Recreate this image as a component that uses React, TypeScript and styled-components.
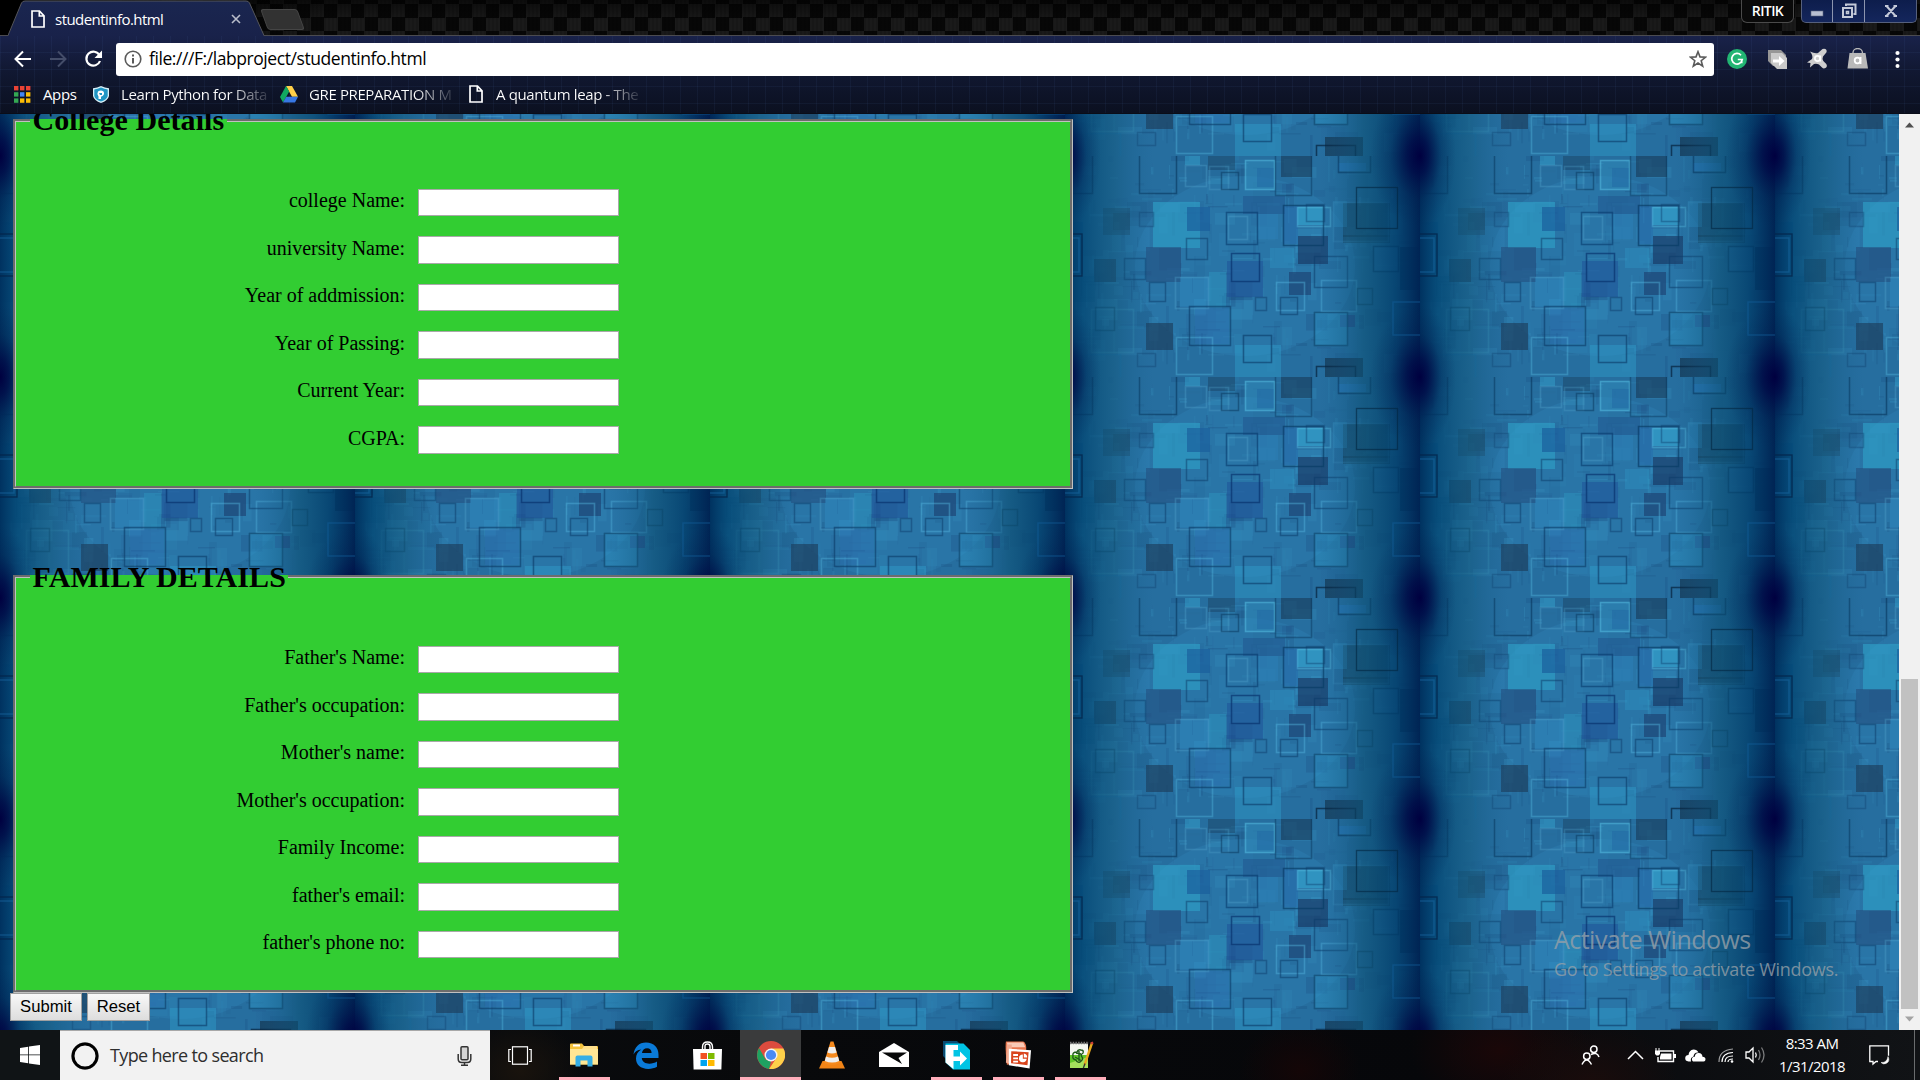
import React from "react";
import styled, { createGlobalStyle } from "styled-components";

const ui = `"Open Sans", "Noto Sans", sans-serif`;

const Global = createGlobalStyle`
  html, body { margin: 0; padding: 0; background: #000; }
  * { box-sizing: border-box; }
`;

const Screen = styled.div`
  width: 1920px;
  height: 1080px;
  display: flex;
  flex-direction: column;
  overflow: hidden;
  font-family: ${ui};
`;

/* ---------- browser chrome ---------- */

const TabStrip = styled.div`
  height: 35px;
  flex: none;
  display: flex;
  align-items: flex-start;
  background:
    linear-gradient(90deg, #000 0, #000 20px, transparent 330px),
    linear-gradient(180deg, rgba(0, 0, 0, 0.55), rgba(0, 0, 0, 0) 60%),
    repeating-linear-gradient(90deg, rgba(0, 0, 0, 0.12) 0 2px, transparent 2px 4px),
    repeating-conic-gradient(#1a1a1a 0 25%, #070707 0 50%) 0 4px / 27px 27px;
`;

const Tab = styled.div`
  position: relative;
  width: 257px;
  height: 36px;
  margin-left: 8px;
  padding: 2px 24px 0 23px;
  display: flex;
  align-items: center;
  color: #fff;
  font-size: 15px;
  z-index: 1;
`;

const TabShape = styled.svg`
  position: absolute;
  inset: 0;
`;

const TabTitle = styled.span`
  position: relative;
  margin-left: 10px;
  padding-bottom: 1px;
  flex: 1;
  white-space: nowrap;
  letter-spacing: -0.55px;
`;

const TabIcon = styled.svg`
  position: relative;
  flex: none;
`;

const NewTab = styled.div`
  width: 37px;
  height: 21px;
  margin: 9px 0 0 -1px;
  background: #323232;
  border: 1px solid #454545;
  border-radius: 3px;
  transform: skewX(20deg);
`;

const WindowControls = styled.div`
  display: flex;
  margin-left: auto;
  height: 23px;
  padding-right: 3px;
`;

const UserBadge = styled.div`
  width: 53px;
  margin-right: 7px;
  border: 1px solid #4a4a4a;
  border-top: 0;
  border-radius: 0 0 6px 6px;
  background: #0a0a0a;
  color: #fff;
  font-size: 14px;
  font-weight: 600;
  line-height: 22px;
  text-align: center;
  letter-spacing: -0.6px;
`;

const ControlGroup = styled.div`
  display: flex;
  border: 1px solid #56607c;
  border-top: 0;
  border-radius: 0 0 5px 5px;
  background: linear-gradient(#0d1d4c, #14265c);
  overflow: hidden;
`;

const Control = styled.div<{ $w: number }>`
  width: ${(p) => p.$w}px;
  display: flex;
  align-items: center;
  justify-content: center;
  & + & { border-left: 1px solid #8c95ae; }
`;

const Chrome = styled.div`
  height: 79px;
  flex: none;
  border-top: 1px solid #4b4b50;
  border-bottom: 1px solid #0a0d18;
  background:
    repeating-linear-gradient(90deg, rgba(90, 130, 200, 0.07) 0 1px, transparent 1px 17px),
    repeating-linear-gradient(180deg, transparent 0 16px, rgba(90, 130, 200, 0.07) 16px 17px),
    linear-gradient(#19224a, #111832 45%, #0b1020);
`;

const Toolbar = styled.div`
  height: 45px;
  display: flex;
  align-items: center;
`;

const NavButtons = styled.div`
  width: 116px;
  padding-left: 14px;
  display: flex;
  align-items: center;
  gap: 17px;
`;

const Omnibox = styled.div`
  width: 1598px;
  height: 33px;
  background: #fff;
  border-radius: 3px;
  display: flex;
  align-items: center;
  padding: 0 7px 0 8px;
  margin-top: 1px;
`;

const Url = styled.span`
  flex: 1;
  margin-left: 7px;
  padding-bottom: 2px;
  font-size: 17.5px;
  line-height: 24px;
  color: #000;
  letter-spacing: -0.43px;
`;

const Extensions = styled.div`
  display: flex;
  align-items: center;
  flex: 1;
  padding-left: 13px;
`;

const Extension = styled.div<{ $w: number }>`
  width: ${(p) => p.$w}px;
  display: flex;
  justify-content: flex-start;
`;

const Bookmarks = styled.div`
  display: flex;
  align-items: center;
  height: 26px;
  padding-left: 14px;
`;

const Bookmark = styled.div<{ $w: number; $gap: number; $fade?: boolean }>`
  width: ${(p) => p.$w}px;
  display: flex;
  align-items: center;
  gap: ${(p) => p.$gap}px;
  svg { flex: none; }
  span {
    white-space: nowrap;
    padding-bottom: 1px;
    font-size: 15px;
    letter-spacing: -0.38px;
    color: ${(p) => (p.$fade ? "transparent" : "#fff")};
    background: ${(p) => (p.$fade ? "linear-gradient(90deg, #fff calc(100% - 38px), rgba(255,255,255,.15))" : "none")};
    background-clip: ${(p) => (p.$fade ? "text" : "border-box")};
  }
`;

/* ---------- page ---------- */

const Viewport = styled.div`
  height: 916px;
  flex: none;
  display: flex;
`;

const Page = styled.div`
  position: relative;
  width: 1899px;
  overflow: hidden;
  font-family: "Liberation Serif", "Times New Roman", serif;
`;

const Backdrop = styled.svg`
  position: absolute;
  inset: 0;
  width: 1899px;
  height: 916px;
`;

const Form = styled.form`
  position: relative;
  margin-top: -10px;
  padding-left: 10px;
`;

const Group = styled.fieldset<{ $h: number; $top: number }>`
  width: 1060px;
  height: ${(p) => p.$h}px;
  margin: 0 0 0 3px;
  padding: ${(p) => p.$top}px 14px 0;
  border: 3px groove #c0c0c0;
  background: #32cd32;
  & + & { margin-top: 71px; }
`;

const Legend = styled.legend<{ $line: number }>`
  padding: 0 2.5px;
  font-size: 30px;
  font-weight: bold;
  line-height: ${(p) => p.$line}px;
  height: 33px;
  letter-spacing: 0.06px;
  color: #000;
`;

const Row = styled.label`
  height: 47.5px;
  display: flex;
  align-items: center;
  gap: 13px;
`;

const Label = styled.span`
  width: 375px;
  padding-bottom: 4px;
  font-size: 20px;
  line-height: 23px;
  text-align: right;
  color: #000;
`;

const Field = styled.input`
  width: 201px;
  height: 27.5px;
  padding: 1px;
  border: 1px solid #a9a9a9;
  border-radius: 0;
  background: #fff;
  outline: none;
`;

const Actions = styled.div`
  display: flex;
  gap: 5px;
`;

const Button = styled.button<{ $w: number }>`
  width: ${(p) => p.$w}px;
  height: 28px;
  padding: 0 0 1px;
  border: 1px solid #a0a0a0;
  border-radius: 0;
  background: linear-gradient(#f8f8f8, #dddddd);
  font: 16.67px "Liberation Sans", Arial, sans-serif;
  color: #000;
`;

const Watermark = styled.div`
  position: absolute;
  left: 1554px;
  top: 808px;
  font-family: ${ui};
  color: rgba(150, 160, 168, 0.8);
  white-space: nowrap;
`;

const WatermarkTitle = styled.div`
  font-size: 25px;
  line-height: 35px;
  letter-spacing: -0.53px;
`;

const WatermarkText = styled.div`
  font-size: 18px;
  line-height: 24px;
  letter-spacing: -0.31px;
`;

const Scrollbar = styled.div`
  width: 21px;
  background: #f1f1f1;
  display: flex;
  flex-direction: column;
  align-items: center;
`;

const ScrollArrow = styled.svg`
  width: 21px;
  height: 21px;
  flex: none;
`;

const Thumb = styled.div`
  width: 17px;
  height: 330px;
  margin-top: auto;
  background: #c1c1c1;
`;

/* ---------- taskbar ---------- */

const Taskbar = styled.div`
  height: 50px;
  flex: none;
  display: flex;
  color: #fff;
  background:
    radial-gradient(ellipse 90px 70px at 1590px 60px, #1b0c0b, transparent),
    radial-gradient(ellipse 90px 60px at 1500px 20px, #1a0708, transparent),
    radial-gradient(ellipse 60px 50px at 1300px 40px, #140607, transparent),
    radial-gradient(ellipse 60px 50px at 520px 40px, #19130d, transparent),
    linear-gradient(90deg, #0b0e11, #08090b 40%, #06070a 75%, #111316 100%);
`;

const Start = styled.div`
  width: 60px;
  display: flex;
  align-items: center;
  justify-content: center;
  background: #101416;
`;

const Search = styled.div`
  width: 430px;
  background: #f2f2f2;
  border-top: 1px solid #a8a8a8;
  display: flex;
  align-items: center;
  padding: 0 18px 0 10px;
`;

const SearchText = styled.span`
  flex: 1;
  margin-left: 10px;
  padding-bottom: 1px;
  font-size: 18px;
  color: #2e2e2e;
  letter-spacing: -0.65px;
`;

const TaskButton = styled.div<{ $w: number; $active?: boolean }>`
  width: ${(p) => p.$w}px;
  display: flex;
  align-items: center;
  justify-content: center;
  background: ${(p) => (p.$active ? "#3a3b3c" : "transparent")};
`;

const Running = styled(TaskButton)<{ $line: number }>`
  background-image: linear-gradient(#ffaebb, #ffaebb);
  background-size: ${(p) => p.$line}px 3px;
  background-position: center bottom;
  background-repeat: no-repeat;
`;

const Tray = styled.div`
  margin-left: auto;
  display: flex;
  align-items: center;
`;

const TrayIcon = styled.div<{ $w: number }>`
  width: ${(p) => p.$w}px;
  display: flex;
  justify-content: center;
`;

const Clock = styled.div`
  width: 94px;
  text-align: center;
  font-size: 15px;
  line-height: 23px;
  letter-spacing: -0.55px;
`;

const ShowDesktop = styled.div`
  width: 6px;
  height: 50px;
  margin-left: 15px;
  border-left: 1px solid #6a6c6e;
`;

/* ---------- tiled backdrop ---------- */

type Box = [number, number, number, number, string, number];

const fills: Box[] = [
  [216, 0, 31, 21, "#173a58", 0.6], [143, 0, 27, 14, "#173a58", 0.4],
  [88, 46, 47, 46, "#30a6cc", 0.55], [122, 51, 23, 24, "#185c9c", 0.65],
  [81, 91, 35, 35, "#234a7c", 0.55], [29, 103, 22, 23, "#1c3e5c", 0.6],
  [38, 52, 27, 27, "#1c4460", 0.4], [48, 57, 17, 17, "#1c4460", 0.35],
  [162, 105, 36, 36, "#1e4f98", 0.5], [178, 40, 42, 18, "#1b4c86", 0.4],
  [193, 58, 20, 25, "#2b7fb8", 0.5],
  [233, 80, 30, 28, "#16325e", 0.6], [224, 116, 22, 23, "#1a3c6c", 0.6],
  [278, 47, 47, 34, "#143a52", 0.5], [278, 79, 47, 8, "#143a52", 0.5],
  [81, 167, 27, 27, "#1b3e5c", 0.65], [260, 202, 38, 19, "#123048", 0.65],
  [275, 159, 15, 12, "#253a7c", 0.5], [335, 91, 20, 43, "#001c46", 0.6],
  [170, 189, 46, 32, "#30a0cc", 0.42], [232, 51, 27, 18, "#35a6d0", 0.6],
  [115, 121, 29, 30, "#2f8cc2", 0.4], [144, 116, 17, 35, "#2d9cc4", 0.4],
  [249, 156, 34, 34, "#2f9ccb", 0.4], [308, 90, 26, 26, "#2a78b4", 0.6],
  [180, 4, 30, 30, "#3398c4", 0.35], [273, 7, 28, 8, "#2a7cc0", 0.6],
  [0, 66, 18, 52, "#0a5a9a", 0.45], [0, 120, 30, 26, "#0a5a8c", 0.3],
  [218, 50, 15, 38, "#2367ac", 0.4], [120, 0, 15, 9, "#34a0cc", 0.5],
  [192, 12, 17, 19, "#1f62a0", 0.4], [130, 152, 34, 36, "#2b6cb2", 0.35],
  [205, 92, 24, 20, "#2f96c4", 0.35], [268, 45, 14, 26, "#2f8cc0", 0.35],
];

const darkLines: Box[] = [
  [74, -4, 38, 42, "#07365c", 0.6], [156, 16, 18, 18, "#07365c", 0.5],
  [161, 56, 32, 33, "#063a6c", 0.6], [218, 49, 41, 41, "#063a64", 0.65],
  [166, 97, 29, 29, "#06306c", 0.65],
  [121, 82, 22, 22, "#0b3c6a", 0.5], [59, 102, 22, 22, "#0b3c6a", 0.5],
  [84, 126, 17, 20, "#0b3c6a", 0.5], [124, 150, 42, 40, "#0a3a68", 0.6],
  [178, 179, 29, 28, "#0a3a68", 0.6], [249, 100, 34, 32, "#0a3a68", 0.5],
  [190, 141, 12, 14, "#0a3a68", 0.45], [215, 141, 18, 18, "#0a3a68", 0.5],
  [273, -5, 33, 22, "#042c54", 0.6],
  [72, 197, 19, 14, "#0a3a68", 0.35], [241, 48, 19, 18, "#0a3a68", 0.4],
  [251, 210, 40, 14, "#031c34", 0.65], [292, 132, 16, 17, "#0a3a58", 0.5],
  [30, 151, 20, 24, "#063858", 0.4], [74, 56, 15, 15, "#0a3a68", 0.35],
  [249, 156, 34, 34, "#0a3a60", 0.6], [308, 90, 26, 26, "#053058", 0.6],
  [210, -20, 37, 60, "#07365c", 0.45], [-20, -20, 48, 58, "#031c44", 0.5],
];

const lightLines: Box[] = [
  [211, 126, 29, 29, "#4fb2dc", 0.45], [256, 124, 36, 32, "#4fb2dc", 0.4],
  [111, 181, 37, 38, "#4fb2dc", 0.42], [26, 153, 43, 44, "#3a92b8", 0.45],
  [328, 146, 34, 33, "#1a6cac", 0.45], [120, 9, 22, 22, "#4fa2cc", 0.35],
  [180, 4, 30, 30, "#56bce0", 0.5], [232, 51, 34, 20, "#56bce0", 0.42],
  [110, 121, 34, 32, "#4fa2cc", 0.35], [163, 60, 20, 24, "#4fa2cc", 0.35],
  [144, 10, 20, 24, "#4fa2cc", 0.3], [268, 46, 56, 40, "#3f92c0", 0.3],
  [20, 198, 36, 30, "#1874ac", 0.4],
];

const grain: Box[] = (() => {
  let seed = 11;
  const rnd = () => {
    seed = (seed * 16807) % 2147483647;
    return seed / 2147483647;
  };
  const tones = ["#3fa6d4", "#123c70", "#2f8cb8", "#1f5c90"];
  return Array.from({ length: 330 }, (_, i): Box => {
    const thin = i % 3;
    const w = thin === 0 ? 1 + rnd() * 2 : 4 + rnd() * 22;
    const h = thin === 1 ? 1 + rnd() * 2 : 4 + rnd() * 22;
    return [Math.round(rnd() * 335), Math.round(rnd() * 200), w, h, tones[i % 4], 0.08 + rnd() * 0.13];
  });
})();

const CircuitTile = () => (
  <Backdrop>
    <defs>
      <linearGradient id="edge">
        <stop offset="0" stopColor="#003260" />
        <stop offset="0.05" stopColor="#004470" stopOpacity="0.75" />
        <stop offset="0.14" stopColor="#10567a" stopOpacity="0.5" />
        <stop offset="0.25" stopColor="#1a6090" stopOpacity="0" />
        <stop offset="0.72" stopColor="#1a6090" stopOpacity="0" />
        <stop offset="0.84" stopColor="#0c5074" stopOpacity="0.6" />
        <stop offset="0.93" stopColor="#003c68" stopOpacity="0.8" />
        <stop offset="1" stopColor="#002454" />
      </linearGradient>
      <radialGradient id="corner">
        <stop offset="0" stopColor="#000040" />
        <stop offset="0.25" stopColor="#000644" stopOpacity="0.75" />
        <stop offset="0.6" stopColor="#001448" stopOpacity="0.25" />
        <stop offset="1" stopColor="#002050" stopOpacity="0" />
      </radialGradient>
      <pattern id="tile" y="42" width="355" height="221" patternUnits="userSpaceOnUse">
        <rect width="355" height="221" fill="#266e9f" />
        <ellipse cx="180" cy="110" rx="110" ry="90" fill="#2b7cb0" opacity="0.5" />
        {[...grain, ...fills].map(([x, y, w, h, c, o], i) => (
          <rect key={i} x={x} y={y} width={w} height={h} fill={c} opacity={o} />
        ))}
        {[...lightLines, ...darkLines].map(([x, y, w, h, c, o], i) => (
          <rect key={i} x={x + 0.5} y={y + 0.5} width={w - 1} height={h - 1} fill="none" stroke={c} strokeWidth="1.6" opacity={o} />
        ))}
        <rect width="355" height="221" fill="url(#edge)" />
        {[[0, 0], [355, 0], [0, 221], [355, 221]].map(([x, y], i) => (
          <ellipse key={i} cx={x} cy={y} rx={x ? 50 : 36} ry="72" fill="url(#corner)" />
        ))}
        <g fill="none" strokeWidth="1.4">
          <rect x="291.500" y="31.500" width="41" height="41" stroke="#02243f" opacity="0.6" />
          <rect x="-10" y="78" width="27" height="42" stroke="#012044" opacity="0.7" />
          <rect x="-8" y="82" width="22" height="34" stroke="#1868a4" opacity="0.5" />
          <rect x="328" y="146" width="36" height="33" stroke="#0f5c98" opacity="0.5" />
        </g>
      </pattern>
    </defs>
    <rect width="1899" height="916" fill="url(#tile)" />
  </Backdrop>
);

/* ---------- icons ---------- */

const PageIcon = ({ h = 18 }: { h?: number }) => (
  <TabIcon width={h * 0.78} height={h} viewBox="0 0 14 18" fill="none" stroke="#fff" strokeWidth="1.7">
    <path d="M1 1h7.5L13 5.8V17H1zM8.3 1v5H13" />
  </TabIcon>
);

const appColors = ["#ea4335", "#ea4335", "#ea4335", "#34a853", "#4285f4", "#fbbc05", "#34a853", "#fbbc05", "#fbbc05"];

const collegeFields = ["college Name:", "university Name:", "Year of addmission:", "Year of Passing:", "Current Year:", "CGPA:"];
const familyFields = ["Father's Name:", "Father's occupation:", "Mother's name:", "Mother's occupation:", "Family Income:", "father's email:", "father's phone no:"];

type GroupProps = { title: string; fields: string[]; h: number; top: number; line: number };

const FieldGroup = ({ title, fields, h, top, line }: GroupProps) => (
  <Group $h={h} $top={top}>
    <Legend $line={line}>{title}</Legend>
    {fields.map((f) => (
      <Row key={f}>
        <Label>{f}</Label>
        <Field type="text" />
      </Row>
    ))}
  </Group>
);

const BrowserTop = () => (
  <>
    <TabStrip>
      <Tab>
        <TabShape width="257" height="36" viewBox="0 0 257 36">
          <defs>
            <linearGradient id="tab" x2="0" y2="1">
              <stop stopColor="#1a2650" />
              <stop offset="1" stopColor="#19224a" />
            </linearGradient>
          </defs>
          <path d="M0 36 13.5 3Q14.5 1 17 1H238Q240.500 1 241.500 3L256 36z" fill="url(#tab)" />
          <path d="M0 35.500 13.500 3Q14.500 1 17 1H238Q240.500 1 241.500 3L256 35.500" fill="none" stroke="#55565c" />
        </TabShape>
        <PageIcon />
        <TabTitle>studentinfo.html</TabTitle>
        <TabIcon width="10" height="10" viewBox="0 0 10 10" stroke="#b9bdca" strokeWidth="1.6">
          <path d="m1 1 8 8M9 1 1 9" />
        </TabIcon>
      </Tab>
      <NewTab />
      <WindowControls>
        <UserBadge>RITIK</UserBadge>
        <ControlGroup>
          <Control $w={30}>
            <svg width="14" height="14"><rect x="1" y="7" width="12" height="5" fill="#b9c0d2" stroke="#5d6680" strokeWidth=".6" /></svg>
          </Control>
          <Control $w={32}>
            <svg width="16" height="16" fill="none" stroke="#c3c9d8" strokeWidth="2">
              <path d="M5 3V1.500H14.500V11H12.500" /><rect x="2" y="5" width="9" height="9" /><rect x="5.500" y="8.500" width="2" height="2" strokeWidth="1.500" />
            </svg>
          </Control>
          <Control $w={52}>
            <svg width="14" height="14" stroke="#c3c9d8"><path d="m2.500 2 9 10M11.500 2l-9 10M1 2h3.500M9.500 2H13M1 12h3.500M9.500 12H13" strokeWidth="2" /></svg>
          </Control>
        </ControlGroup>
      </WindowControls>
    </TabStrip>
    <Chrome>
      <Toolbar>
        <NavButtons>
          <svg width="18" height="18" viewBox="0 0 18 18" fill="none" stroke="#fff" strokeWidth="2"><path d="M17 9H2M9 1.500 1.500 9 9 16.500" /></svg>
          <svg width="18" height="18" viewBox="0 0 18 18" fill="none" stroke="#444d69" strokeWidth="2"><path d="M1 9h15M9 1.500 16.500 9 9 16.500" /></svg>
          <svg width="19" height="18" viewBox="0 0 19 18" fill="none" stroke="#fff" strokeWidth="2.200"><path d="M15.500 5.200A7 7 0 1 0 16 11" /><path d="M18 .5V8h-7.500z" fill="#fff" stroke="none" /></svg>
        </NavButtons>
        <Omnibox>
          <svg width="18" height="18" viewBox="0 0 18 18"><circle cx="9" cy="9" r="7.800" fill="none" stroke="#5a5a5a" strokeWidth="1.600" /><path d="M8 8h2v5.500H8zM8 4.500h2v2H8z" fill="#5a5a5a" /></svg>
          <Url>file:///F:/labproject/studentinfo.html</Url>
          <svg width="18" height="18" viewBox="0 0 18 18" fill="none" stroke="#5a5a5a" strokeWidth="1.600"><path d="m9 1.700 2 5.200 5.600.3-4.400 3.500 1.500 5.400L9 13l-4.700 3.100 1.500-5.400L1.400 7.200 7 6.900z" /></svg>
        </Omnibox>
        <Extensions>
          <Extension $w={41}>
            <svg width="20" height="20" viewBox="0 0 20 20"><circle cx="10" cy="10" r="10" fill="#22b573" /><path d="M14 6.200A5.300 5.300 0 1 0 15.300 10.500H10.800M14.700 10.500v3.800" fill="none" stroke="#fff" strokeWidth="1.700" /></svg>
          </Extension>
          <Extension $w={39}>
            <svg width="20" height="20" viewBox="0 0 20 20"><path d="M0 1H13L18 6V17H5L0 12z" fill="#969696" /><path d="M3 4H14L19 9V20H9L3 14z" fill="#c9c9c9" /><path d="M5 10.500h6V7l5.500 5-5.500 5v-3.500H5z" fill="#fff" /></svg>
          </Extension>
          <Extension $w={40}>
            <svg width="21" height="21" viewBox="0 0 21 21"><path d="M3 3.500Q8 6 11 5L15.500 1q2.500-1 4 1 .8 2-1 3.500L16 8.500q-1 2 .3 4.500l3 3q1.500 2.500-.8 4-2 1-3.500-.5L12 16.500q-2.500-1.200-5-.5l-4 3.500L3.500 15 0 14.500 5 11q1.500-3-2-7.500z" fill="#cfcfcf" /><circle cx="10.500" cy="10.500" r="2.600" fill="none" stroke="#fff" strokeWidth="1.700" /><path d="M13.300 7.500v6" stroke="#fff" strokeWidth="1.600" /></svg>
          </Extension>
          <Extension $w={48}>
            <svg width="22" height="21" viewBox="0 0 22 21"><path d="M2.500 5h16L21 20.500H.5z" fill="#b9b9b9" /><path d="M6 6V4.500a4.700 4 0 0 1 9.400 0V6" fill="none" stroke="#b9b9b9" strokeWidth="1.300" /><circle cx="10.500" cy="12.500" r="2.800" fill="none" stroke="#fff" strokeWidth="1.800" /><path d="M13.600 9v7" stroke="#fff" strokeWidth="1.700" /></svg>
          </Extension>
          <svg width="5" height="18" viewBox="0 0 5 18" fill="#fff"><circle cx="2.500" cy="3" r="2.100" /><circle cx="2.500" cy="9.500" r="2.100" /><circle cx="2.500" cy="16" r="2.000" /></svg>
        </Extensions>
      </Toolbar>
      <Bookmarks>
        <Bookmark $w={79} $gap={12}>
          <svg width="17" height="17">{appColors.map((c, i) => <rect key={i} x={(i % 3) * 6} y={Math.floor(i / 3) * 6.2} width="4.400" height="4.400" fill={c} />)}</svg>
          <span>Apps</span>
        </Bookmark>
        <Bookmark $w={187} $gap={12} $fade>
          <svg width="16" height="17" viewBox="0 0 16 17"><path d="M8 0q4 2 8 2.200V10q-1 4.500-8 7-7-2.500-8-7V2.200Q4 2 8 0z" fill="#d5eef6" /><path d="M8 1.500q3.500 1.700 6.700 1.900V10Q13.800 13.500 8 15.600 2.200 13.500 1.300 10V3.400Q4.500 3.200 8 1.500z" fill="#2196c4" /><path d="M5.500 13V10.500Q3.500 8 5 5.500q3-2 5.500 0Q12 8 9.500 10l-1.500.8V13z" fill="#fff" /><path d="M6 7h3v2H7z" fill="#2196c4" /></svg>
          <span>Learn Python for Data</span>
        </Bookmark>
        <Bookmark $w={189} $gap={11} $fade>
          <svg width="18" height="17" viewBox="0 0 18 17"><path d="M6 0h6l6 10.800h-6z" fill="#ffcf48" /><path d="M6 0 0 11l3 5.500 6.200-11z" fill="#11a861" /><path d="M3 16.500 6.200 10.800H18l-3 5.700z" fill="#3777e3" /></svg>
          <span>GRE PREPARATION M</span>
        </Bookmark>
        <Bookmark $w={184} $gap={13} $fade>
          <PageIcon />
          <span>A quantum leap - The</span>
        </Bookmark>
      </Bookmarks>
    </Chrome>
  </>
);

const TaskbarArea = () => (
  <Taskbar>
    <Start>
      <svg width="20" height="20" viewBox="0 0 20 20" fill="#fff"><path d="M0 2.900 8.200 1.700V9.500H0zM9 1.600 20 0v9.500H9zM0 10.300h8.200v7.900L0 17zM9 10.300h11V20L9 18.400z" /></svg>
    </Start>
    <Search>
      <svg width="30" height="30" viewBox="0 0 30 30"><circle cx="15" cy="15" r="12" fill="none" stroke="#000" strokeWidth="3" /><circle cx="15" cy="15" r="13.400" fill="none" stroke="#000" opacity=".35" /></svg>
      <SearchText>Type here to search</SearchText>
      <svg width="15" height="20" viewBox="0 0 15 20" fill="none" stroke="#333" strokeWidth="1.500"><rect x="4" y=".8" width="7" height="13" rx="1" fill="#d4d4d4" /><path d="M1.200 8v5q0 3.500 3.500 3.500h5.600q3.500 0 3.500-3.500V8M7.500 16.500v3M4 19.200h7" /></svg>
    </Search>
    <TaskButton $w={60}>
      <svg width="24" height="19" viewBox="0 0 24 19" fill="none" stroke="#fff" strokeWidth="1.200"><rect x="4.500" y=".8" width="15" height="17.400" /><path d="M3 3.500H.8v12H3M21 3.500h2.200v12H21" /></svg>
    </TaskButton>
    <Running $w={68} $line={51}>
      <svg width="28" height="24" viewBox="0 0 28 24"><path d="M0 1.500Q0 .5 1 .5h11l2 2.500h13q1 0 1 1V21.500H0z" fill="#f5c33c" /><path d="M0 6h28v15.500H0z" fill="#ffe694" /><path d="M3 1.500h7v2H3z" fill="#fff" /><path d="M14 3h13v3H12z" fill="#ffe08a" /><path d="M5.500 23.500v-9q0-2 2-2h13q2 0 2 2v9h-5v-6h-7v6z" fill="#35aee6" /></svg>
    </Running>
    <TaskButton $w={56}>
      <svg width="26" height="27" viewBox="0 0 26 27"><path d="M.5 12.500C1.500 5 6 .5 13 .5c8 0 12.500 5 12.500 12v3.500H8.800c.4 4 3.600 5.700 7.500 5.700 3 0 5.500-.8 7.700-2.100v5.200c-2.500 1.400-5.500 2.100-8.700 2.100C7.500 26.900 3 22.500 3 16.500c0-3.700 1.900-7 5.200-8.900C4.500 7.800 2 9.500.5 12.500zM9 11h9.600c0-3-1.700-4.700-4.500-4.700S9.300 8 9 11z" fill="#0a7ad8" /></svg>
    </TaskButton>
    <TaskButton $w={66}>
      <svg width="29" height="29" viewBox="0 0 29 29"><path d="M0 8h29l-.6 20.500H.6z" fill="#fff" /><path d="M9.500 9V6q0-5 5-5t5 5v3M12 9V5.500Q12 3 14.500 3T17 5.500V9" fill="none" stroke="#fff" strokeWidth="1.400" /><path d="M7.500 12H14v6H7.500z" fill="#f25022" /><path d="M15 12h6.500v6H15z" fill="#7fba00" /><path d="M7.500 19H14v6H7.500z" fill="#00a4ef" /><path d="M15 19h6.500v6H15z" fill="#ffb900" /></svg>
    </TaskButton>
    <Running $w={61} $line={61} $active>
      <svg width="28" height="28" viewBox="0 0 28 28"><circle cx="14" cy="14" r="14" fill="#dd4b3e" /><path d="M2 7 8.500 18.500 14 20.500 12 27.900A14 14 0 0 1 2 7z" fill="#1ea261" /><path d="M14 7.500h12.400A14 14 0 0 1 12 27.900L19.500 17z" fill="#fdd04a" /><circle cx="14" cy="14" r="6.500" fill="#f4f4f4" /><circle cx="14" cy="14" r="5.100" fill="#4a8af4" /></svg>
    </Running>
    <TaskButton $w={61}>
      <svg width="26" height="28" viewBox="0 0 26 28"><path d="M3.500 20h19l3.500 7.500H0z" fill="#f18417" /><path d="M11.500.5h3L21 22q-8 4-16 0z" fill="#f58a1e" /><path d="m10 6 6 0 1.600 5.500q-4.600 2-9.200 0z" fill="#eee" /><path d="m7 15.500q6 2.500 12 0l1.200 4.500q-7 3-14.400 0z" fill="#eee" /></svg>
    </TaskButton>
    <TaskButton $w={63}>
      <svg width="30" height="24" viewBox="0 0 30 24"><path d="M0 9 15 0l15 9v15H0z" fill="#fff" /><path d="M3 9.500h25l-8.500 5.500 3.500 6z" fill="#060708" /></svg>
    </TaskButton>
    <Running $w={62} $line={51}>
      <svg width="28" height="29" viewBox="0 0 28 29"><path d="M1 0h14l5 5v16H7l-6-6z" fill="#0a4a70" /><path d="M3.500 2.500h18L28 9v19.500H11l-7.500-7z" fill="#00c4e4" /><path d="M3.500 4H16v5h-4.500v19l-8-6.500z" fill="#fff" /><path d="M7 15.500h11v-5l7 7-7 7v-4.500H7z" fill="#fff" /></svg>
    </Running>
    <Running $w={62} $line={51}>
      <svg width="28" height="28" viewBox="0 0 29 28"><path d="M2 0h18q3 2 3 6v14L3 24Q1 6 2 0z" fill="#e8764f" /><path d="M3 1h17l2 5H4z" fill="#f9c9b6" /><path d="M3 3h5v20l-6-1z" fill="#f2a98f" /><path d="m5 7.500 23 1.500-1.500 19L5 24.500z" fill="#fff" /><path d="m7.500 10 18 1.200-1.200 13.500-17-2.200z" fill="#d9441c" /><path d="M9.500 13h5v2h-5zM9.500 16.500h5v2h-5zM9.500 20h5v1.800h-5z" fill="#fff" /><path d="M19.500 13.500a4 4 0 1 0 4 4.500h-4z" fill="#fff" /><path d="M20.500 12.500a4 4 0 0 1 3.500 4h-3.500z" fill="#fff" /></svg>
    </Running>
    <Running $w={62} $line={51}>
      <svg width="28" height="28" viewBox="0 0 28 28"><path d="M4 2.500h18v22L4 27z" fill="#f4f7f1" /><path d="M4 14h18v12.500H4z" fill="#60c628" /><path d="M4 22 22 16v11H4z" fill="#a4e05c" /><path d="M4 2h19" stroke="#777" strokeWidth="2.500" strokeDasharray="1.500 1.200" /><path d="M7 15q-1-4 4-4 1-3 4-2 3 0 2 3-3 2-1 4 2 2-2 5-3 1-4-2-4-1-3-4zM10 12l5 1M9 16l7 4M13 10v10" fill="none" stroke="#1f5a1a" strokeWidth="1.400" /><path d="M26 2 18.500 24" stroke="#e8a81e" strokeWidth="2.400" /><path d="m19 22.500-1.600 4.500" stroke="#333" strokeWidth="1.300" /><path d="m25.500 1 1 2" stroke="#d0403a" strokeWidth="2.500" /></svg>
    </Running>
    <Tray>
      <TrayIcon $w={67}>
        <svg width="19" height="20" viewBox="0 0 19 20" fill="none" stroke="#fff" strokeWidth="1.500"><circle cx="12.800" cy="4.200" r="3.200" /><circle cx="5.800" cy="11.200" r="3.200" /><path d="M10 9.500q6-3 8 2.500M1 19.500q4.500-9 9.500 0" /></svg>
      </TrayIcon>
      <TrayIcon $w={22}>
        <svg width="17" height="10" viewBox="0 0 17 10" fill="none" stroke="#fff" strokeWidth="1.500"><path d="m1 9 7.500-7.500L16 9" /></svg>
      </TrayIcon>
      <TrayIcon $w={38}>
        <svg width="21" height="15" viewBox="0 0 21 15"><path d="M5 3h13.500v10.500H3V9" fill="none" stroke="#fff" strokeWidth="1.400" /><path d="M6 5.500h10.500V11.500H5V9zM19 6h2v4h-2zM0 2.500h5V6L3.500 7.500h-2L0 6zM.5 0h1v3h-1zM3.500 0h1v3h-1z" fill="#fff" /></svg>
      </TrayIcon>
      <TrayIcon $w={22}>
        <svg width="21" height="13" viewBox="0 0 21 13"><path d="M3.500 12.500Q0 12 .2 9T3.500 6Q4 1 8.500.5q3.500 0 5 3Q9 3 8.500 7.500 5 8.500 6 12.500z" fill="#fff" /><path d="M8 12.500Q6.500 11.500 7 9.500T9.800 7.800Q10 4.200 13.500 4t4 3.700q3 .3 3 2.600t-2 2.200z" fill="#fff" /></svg>
      </TrayIcon>
      <TrayIcon $w={39}>
        <svg width="16" height="15" viewBox="0 0 16 15" fill="none" stroke="#fff" strokeWidth="1.200"><path d="M1 14Q1 2 15 1" opacity=".6" /><path d="M4 14Q4 5 15 4.500" /><path d="M7 14q0-6 8-6M10 14q0-3 5-3" /><circle cx="14" cy="13.500" r="1.300" fill="#fff" stroke="none" /></svg>
      </TrayIcon>
      <TrayIcon $w={20}>
        <svg width="20" height="18" viewBox="0 0 20 18" fill="none" stroke="#fff" strokeWidth="1.300"><path d="M1 6h3l4-4v14l-4-4H1zM10.500 6.500q1.500 2.500 0 5" /><path d="M13.500 4q3 5 0 10M16.500 1.500q5 7.500 0 15" opacity=".45" /></svg>
      </TrayIcon>
      <Clock>8:33 AM<br />1/31/2018</Clock>
      <TrayIcon $w={40}>
        <svg width="21" height="21" viewBox="0 0 21 21" fill="none" stroke="#fff" strokeWidth="1.300"><path d="M9 16.500H7L4 19v-2.500H.8V.8h18.700v10" /><path d="M19 11.500q2.500 5-2 7-3 1.200-5-1 6 .5 7-6z" fill="#fff" strokeWidth=".5" /></svg>
      </TrayIcon>
      <ShowDesktop />
    </Tray>
  </Taskbar>
);

export default function App() {
  return (
    <Screen>
      <Global />
      <BrowserTop />
      <Viewport>
        <Page>
          <CircuitTile />
          <Form onSubmit={(e) => e.preventDefault()}>
            <FieldGroup title="College Details" fields={collegeFields} h={385} top={41.9} line={31} />
            <FieldGroup title="FAMILY DETAILS" fields={familyFields} h={433} top={42.9} line={33} />
            <Actions>
              <Button type="submit" $w={72}>Submit</Button>
              <Button type="reset" $w={63}>Reset</Button>
            </Actions>
          </Form>
          <Watermark>
            <WatermarkTitle>Activate Windows</WatermarkTitle>
            <WatermarkText>Go to Settings to activate Windows.</WatermarkText>
          </Watermark>
        </Page>
        <Scrollbar>
          <ScrollArrow viewBox="0 0 21 21"><path d="M6 13.500 10.500 8.500 15 13.500z" fill="#505050" /></ScrollArrow>
          <Thumb />
          <ScrollArrow viewBox="0 0 21 21"><path d="M6 7.500h9L10.500 12.500z" fill="#a3a3a3" /></ScrollArrow>
        </Scrollbar>
      </Viewport>
      <TaskbarArea />
    </Screen>
  );
}
